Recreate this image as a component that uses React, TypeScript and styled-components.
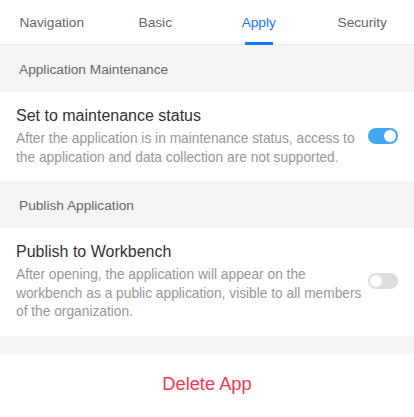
import React, { useState } from "react";
import styled, { createGlobalStyle } from "styled-components";

const GlobalStyle = createGlobalStyle`
  body {
    margin: 0;
    background: #ffffff;
    font-family: "Liberation Sans", Arial, sans-serif;
  }
`;

const TABS = ["Navigation", "Basic", "Apply", "Security"];

const App = () => {
  const [active, setActive] = useState<number>(2);
  const [maintenance, setMaintenance] = useState<boolean>(true);
  const [publish, setPublish] = useState<boolean>(false);

  return (
    <Page>
      <GlobalStyle />
      <TabBar>
        {TABS.map((tab, i) => (
          <Tab key={tab} active={i === active} onClick={() => setActive(i)}>
            {tab}
          </Tab>
        ))}
      </TabBar>

      <SectionHeader>Application Maintenance</SectionHeader>
      <Row>
        <RowText>
          <RowTitle>Set to maintenance status</RowTitle>
          <RowDesc>
            After the application is in maintenance status, access to the
            application and data collection are not supported.
          </RowDesc>
        </RowText>
        <Switch on={maintenance} onClick={() => setMaintenance(!maintenance)} />
      </Row>

      <SectionHeader>Publish Application</SectionHeader>
      <Row>
        <RowText>
          <RowTitle>Publish to Workbench</RowTitle>
          <RowDesc>
            After opening, the application will appear on the workbench as a
            public application, visible to all members of the organization.
          </RowDesc>
        </RowText>
        <Switch on={publish} onClick={() => setPublish(!publish)} />
      </Row>

      <Spacer />
      <DeleteButton>Delete App</DeleteButton>
    </Page>
  );
};

const Page = styled.div`
  width: 414px;
  background: #ffffff;
`;

const TabBar = styled.div`
  display: grid;
  grid-template-columns: repeat(4, 1fr);
  height: 44px;
  border-bottom: 1px solid #ebedf0;
`;

const Tab = styled.div<{ active: boolean }>`
  position: relative;
  display: flex;
  align-items: center;
  justify-content: center;
  font-size: 13.7px;
  color: ${(p) => (p.active ? "#1677ff" : "#646566")};
  cursor: pointer;

  &::after {
    content: "";
    display: ${(p) => (p.active ? "block" : "none")};
    position: absolute;
    left: 50%;
    bottom: -1px;
    width: 28px;
    height: 3px;
    margin-left: -14px;
    background: #1677ff;
  }
`;

const SectionHeader = styled.div`
  background: #f5f5f7;
  color: #646566;
  font-size: 13.7px;
  height: 47px;
  line-height: 49px;
  padding-left: 19px;
`;

const Row = styled.div`
  display: flex;
  align-items: center;
  padding: 13px 16px 14px 16px;
  gap: 4px;
`;

const RowText = styled.div`
  flex: 1;
`;

const RowTitle = styled.div`
  font-size: 16px;
  line-height: 22px;
  color: #323233;
  margin-bottom: 3px;
`;

const RowDesc = styled.div`
  font-size: 13.75px;
  line-height: 18.5px;
  color: #969799;
`;

const Switch = styled.div<{ on: boolean }>`
  position: relative;
  flex-shrink: 0;
  width: 30px;
  height: 16px;
  border-radius: 8px;
  background: ${(p) => (p.on ? "#42a7f1" : "#dcdee0")};
  cursor: pointer;

  &::after {
    content: "";
    position: absolute;
    top: 2px;
    left: ${(p) => (p.on ? "16px" : "2px")};
    width: 12px;
    height: 12px;
    border-radius: 50%;
    background: #ffffff;
  }
`;

const Spacer = styled.div`
  height: 18px;
  background: #f5f5f7;
`;

const DeleteButton = styled.div`
  height: 60px;
  display: flex;
  align-items: center;
  justify-content: center;
  font-size: 18.3px;
  color: #f6384f;
  cursor: pointer;
`;

export default App;
